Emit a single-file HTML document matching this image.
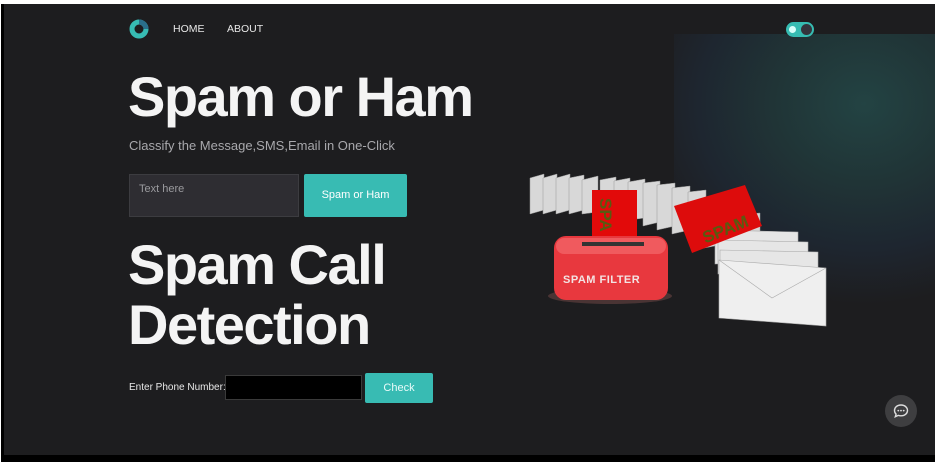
<!DOCTYPE html>
<html><head><meta charset="utf-8"><style>
html,body{margin:0;padding:0;background:#fff;}
body{width:940px;height:464px;position:relative;overflow:hidden;font-family:"Liberation Sans",Arial,sans-serif;}
#frame{position:absolute;left:1px;top:4px;width:934px;height:458px;background:#000;}
#page{position:absolute;left:4px;top:4px;width:931px;height:451px;background:#1d1d1f;overflow:hidden;}
#glow{position:absolute;left:670px;top:30px;width:270px;height:430px;background:radial-gradient(ellipse 230px 200px at 190px 70px,#234343 0%,#203436 40%,#1e2630 72%,rgba(29,29,31,0) 100%);}
.nav{position:absolute;top:19px;font-size:10.5px;color:#e8e8e8;}
h1{position:absolute;margin:0;left:124px;font-weight:900;color:#f4f4f4;font-size:56px;letter-spacing:-1.5px;line-height:60px;}
</style></head><body>
<div id="frame"></div>
<div id="page">
<div id="glow"></div>
<svg style="position:absolute;left:124px;top:14px" width="22" height="22" viewBox="0 0 22 22"><circle cx="11" cy="11" r="7" fill="none" stroke="#37bbb3" stroke-width="5"/><path d="M11 4 A7 7 0 0 1 18 11" fill="none" stroke="#2a6e8a" stroke-width="5"/></svg>
<div class="nav" style="left:169px">HOME</div>
<div class="nav" style="left:223px">ABOUT</div>
<div style="position:absolute;left:782px;top:18px;width:28px;height:15px;border-radius:8px;background:#36bcb2;"><div style="position:absolute;left:3px;top:4px;width:7px;height:7px;border-radius:50%;background:#d8fffb"></div><div style="position:absolute;right:2px;top:2px;width:11px;height:11px;border-radius:50%;background:#34343c"></div></div>
<h1 style="top:63px">Spam or Ham</h1>
<div style="position:absolute;left:125px;top:134px;font-size:13px;color:#a8a8ac">Classify the Message,SMS,Email in One-Click</div>
<div style="position:absolute;left:125px;top:170px;width:170px;height:43px;background:#2e2d32;border:1px solid #3c3c40;box-sizing:border-box;font-size:11px;color:#9a9a9e;padding:8px 9px">Text here</div>
<div style="position:absolute;left:300px;top:170px;width:103px;height:43px;background:#38bbb3;border-radius:2px;color:#fff;font-size:11px;text-align:center;line-height:43px">Spam or Ham</div>
<h1 style="top:231px">Spam Call<br>Detection</h1>
<div style="position:absolute;left:125px;top:378px;font-size:10px;color:#e8e8e8">Enter Phone Number:</div>
<div style="position:absolute;left:221px;top:371px;width:137px;height:25px;background:#000;border:1px solid #3a3a3a;box-sizing:border-box"></div>
<div style="position:absolute;left:361px;top:369px;width:68px;height:30px;background:#38bbb3;border-radius:2px;color:#e8fbf9;font-size:11px;text-align:center;line-height:30px">Check</div>
<div style="position:absolute;left:881px;top:391px;width:32px;height:32px;border-radius:50%;background:#3e3e40"><svg width="32" height="32" viewBox="0 0 32 32"><path d="M16 10c-4 0-6.5 2.5-6.5 5.5 0 1.5.6 2.7 1.6 3.6l-.8 2.6 3-1.3c.8.3 1.7.4 2.7.4 4 0 6.5-2.5 6.5-5.3S20 10 16 10z" fill="none" stroke="#ddd" stroke-width="1.4"/><circle cx="13.3" cy="15.6" r=".9" fill="#ddd"/><circle cx="16" cy="15.6" r=".9" fill="#ddd"/><circle cx="18.7" cy="15.6" r=".9" fill="#ddd"/></svg></div>
<svg style="position:absolute;left:0;top:0" width="931" height="451" viewBox="4 4 931 451">
<g fill="#d8d8d8" stroke="#999" stroke-width=".5">
<polygon points="530,178 544,174 544,210 530,214"/><polygon points="543,178 557,174 557,210 543,214"/><polygon points="556,178 570,174 570,210 556,214"/><polygon points="569,178 584,175 584,210 569,214"/><polygon points="582,180 598,176 598,212 582,214"/>
<polygon points="600,180 616,177 616,214 600,216"/><polygon points="614,181 630,178 630,216 614,218"/><polygon points="628,182 645,179 645,218 628,220"/><polygon points="643,183 660,181 660,222 643,226"/><polygon points="657,185 675,183 675,226 657,230"/><polygon points="672,188 690,186 690,230 672,234"/><polygon points="688,192 706,190 706,236 688,240"/><polygon points="704,200 725,196 725,244 704,248"/><polygon points="720,210 742,208 744,258 720,262"/><polygon points="735,215 760,213 760,262 735,266"/>
</g>
<g fill="#e6e6e6" stroke="#aaa" stroke-width=".6">
<polygon points="715,230 798,232 798,262 715,264"/><polygon points="718,240 808,242 808,272 718,274"/><polygon points="720,250 818,252 818,282 720,284"/>
<polygon points="719,260 826,268 826,326 719,318" fill="#efefef"/>
<polyline points="719,260 772,298 826,268" fill="none"/>
</g>
<polygon points="674,206 745,185 762,226 692,253" fill="#dd0c0c"/>
<text x="700" y="240" transform="rotate(-22 712 228)" font-size="17" font-weight="bold" fill="#5a5a10" font-family="Liberation Sans">SPAM</text>
<rect x="592" y="190" width="45" height="55" fill="#e20a0a"/>
<text x="600" y="198" transform="rotate(90 600 198)" font-size="17" font-weight="bold" fill="#5a5a10" font-family="Liberation Sans">SPA</text>
<ellipse cx="610" cy="296" rx="62" ry="8" fill="#4a3434"/>
<rect x="554" y="236" width="114" height="64" rx="12" fill="#e8383e"/>
<rect x="556" y="238" width="110" height="16" rx="8" fill="#f05a5e"/>
<rect x="582" y="242" width="62" height="4" fill="#333"/>
<text x="563" y="283" font-size="11" font-weight="bold" fill="#f3e3e3" font-family="Liberation Sans" letter-spacing=".5">SPAM FILTER</text>
</svg>
</div>
</body></html>
